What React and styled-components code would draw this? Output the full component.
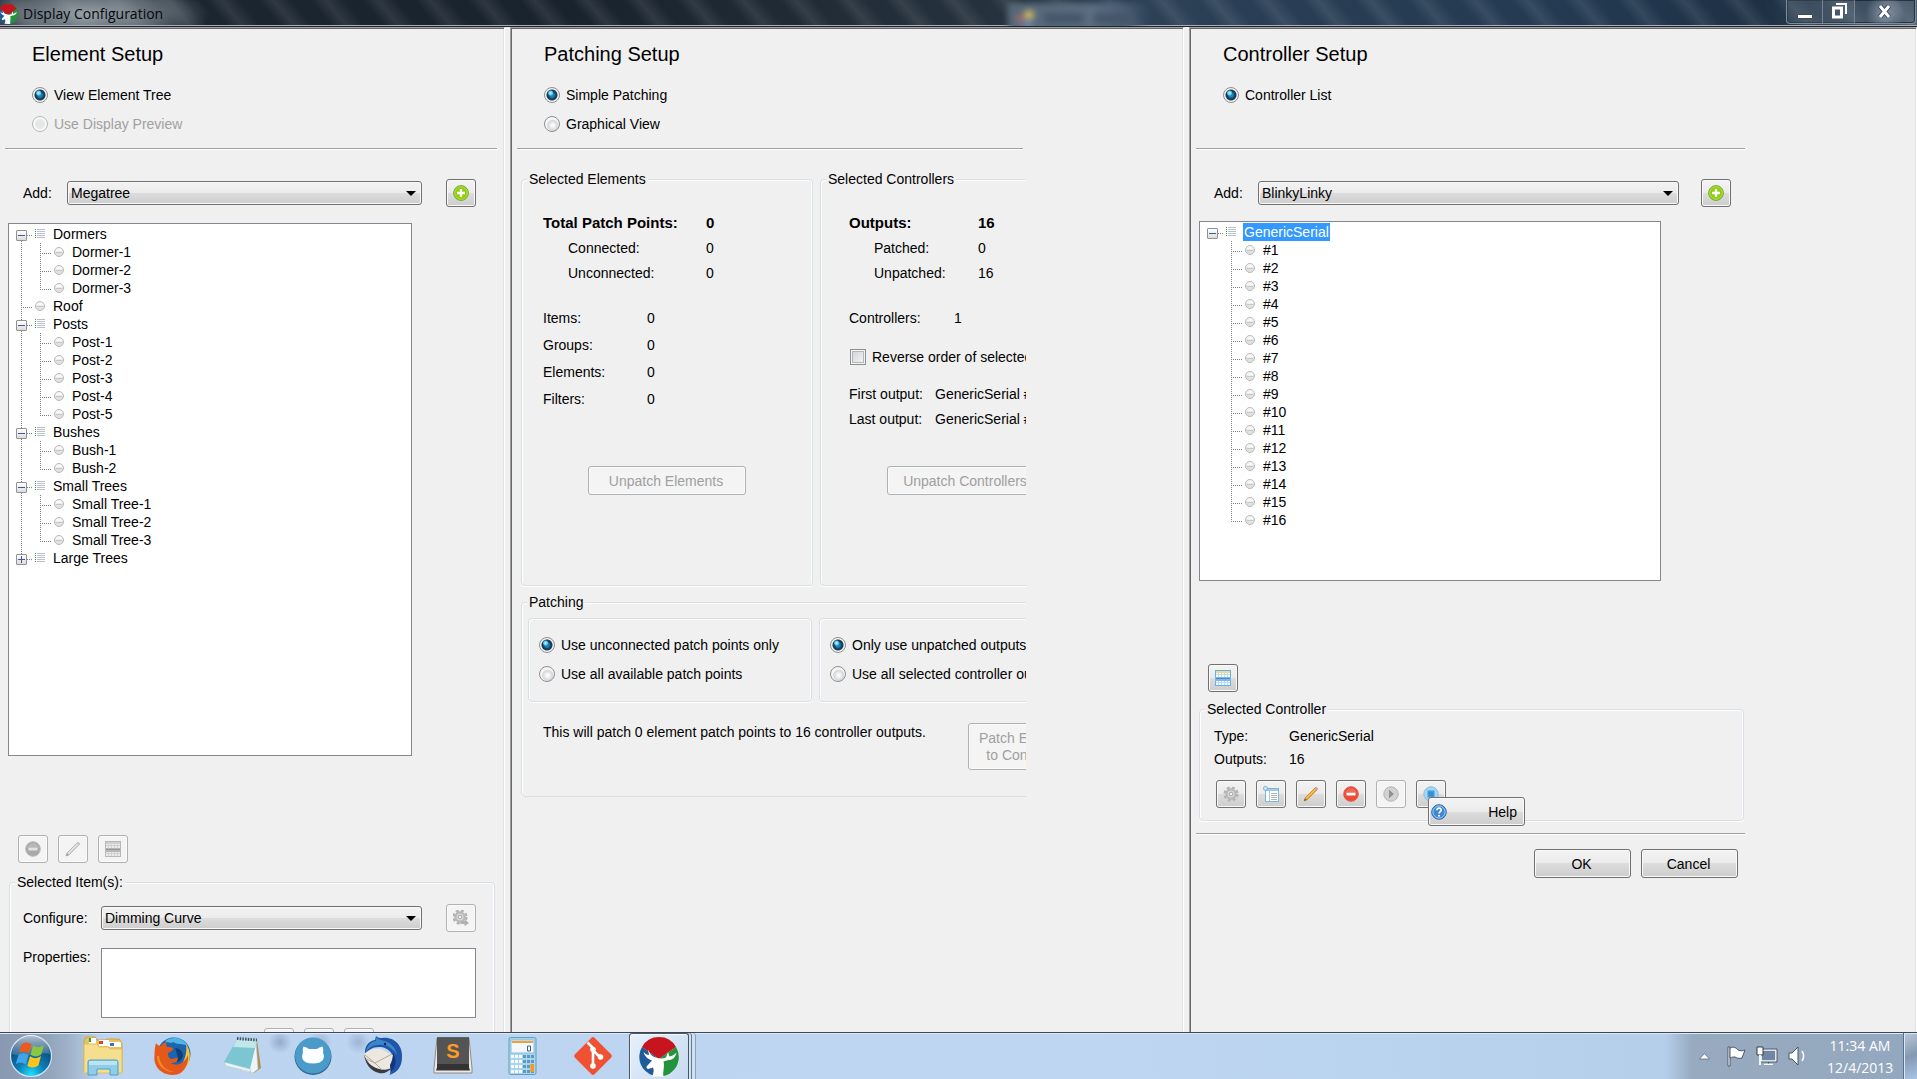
import React from "react";
import styled, { createGlobalStyle, css } from "styled-components";

const Global = createGlobalStyle`
  *, *::before, *::after { box-sizing: border-box; }
  html, body, #root { height: 100%; }
  body { margin: 0; overflow: hidden; }
  body, button, input, select, textarea {
    font-family: "Liberation Sans", Arial, sans-serif;
    font-size: 14px;
    line-height: 18px;
    color: #000;
  }
`;

const raised = "linear-gradient(#f3f3f3, #ebebeb 50%, #dddddd 50%, #cdcdcd)";

/* ---------- window frame ---------- */

const Screen = styled.div`
  display: flex;
  flex-direction: column;
  height: 100%;
  background: #f0f0f0;
`;

const TitleBar = styled.header`
  position: relative;
  display: flex;
  flex: none;
  justify-content: space-between;
  height: 27px;
  border-bottom: 1px solid #1c2430;
  box-shadow: inset 0 -1px #a9adba;
  overflow: hidden;
  background:
    radial-gradient(ellipse 120px 34px at 90px 14px, rgba(190, 200, 206, 0.75), rgba(150, 162, 170, 0.5) 60%, transparent),
    repeating-linear-gradient(50deg, rgba(255, 255, 255, 0) 0 14px, rgba(255, 255, 255, 0.09) 26px, rgba(255, 255, 255, 0) 40px),
    linear-gradient(90deg, #1d2731, #19232e 30%, #26323d 52%, #2c4056 60%, #233a52 82%, #1e3044 92%, #4d5e70);
`;

const Caption = styled.div`
  display: flex;
  align-items: center;
  gap: 5px;
  z-index: 1;
  padding-top: 2px;

  svg { display: block; margin-left: -2px; }
  h1 {
    margin: 0;
    font: 400 14px/20px "Open Sans", "Noto Sans", sans-serif;
    color: #05070a;
  }
`;

const GhostTab = styled.div`
  position: absolute;
  left: 1008px;
  top: 3px;
  width: 144px;
  height: 30px;
  filter: blur(3px);
  background:
    radial-gradient(circle 6px at 21px 12px, #d8c060 60%, transparent),
    radial-gradient(circle 5px at 12px 16px, #b06a70 50%, transparent),
    radial-gradient(circle 5px at 20px 23px, #6a94d0 50%, transparent),
    linear-gradient(90deg, transparent 34px, #46566a 38px 74px, transparent 78px 84px, #46566a 88px 120px, transparent 124px) 0 10px / 100% 11px no-repeat,
    linear-gradient(90deg, #566878, #5b6f82 60%, #4a5e74 80%, transparent);
`;

const WindowButtons = styled.div`
  display: flex;
  z-index: 1;
  height: 24px;
  margin-right: 1px;
  border: 1px solid #7f8c9a;
  border-top: 0;
  border-radius: 0 0 4px 4px;
  box-shadow: inset 0 0 0 1px rgba(20, 30, 42, 0.7);
`;

const WindowButton = styled.button`
  display: flex;
  align-items: center;
  justify-content: center;
  width: ${(p) => p.$width}px;
  padding: 0 0 2px;
  border: 0;
  border-left: ${(p) => (p.$first ? "0" : "1px solid #76838f")};
  background: ${(p) =>
    p.$glow ? "radial-gradient(circle at 50% 60%, rgba(190,205,220,.55), transparent 60%)" : "rgba(120,135,150,.22)"};
`;

const Columns = styled.main`
  display: grid;
  flex: 1;
  min-height: 0;
  grid-template-columns: minmax(0, 505fr) minmax(0, 674fr) minmax(0, 728fr);
  column-gap: 5px;
`;

const Panel = styled.section`
  display: flex;
  flex-direction: column;
  min-height: 0;
  overflow: hidden;
  border-top: 1px solid #a0a0a0;
  border-left: ${(p) => (p.$flush ? "0" : "1px solid #a0a0a0")};
  border-right: 1px solid #fff;
  box-shadow: inset ${(p) => (p.$flush ? "0" : "1px")} 1px #696969, inset -1px 0 #e3e3e3;
  padding: 1px 0 0 ${(p) => (p.$flush ? 0 : 1)}px;
`;

const Content = styled.div`
  display: flex;
  flex-direction: column;
  flex: none;
  width: ${(p) => p.$width}px;
  max-width: 100%;
  overflow: hidden;
  white-space: nowrap;
`;

const Head = styled.div`
  min-height: 119px;
  padding: 13px 0 0 32px;

  h2 {
    margin: 0 0 14px;
    font-size: 20px;
    font-weight: 400;
    line-height: 24px;
  }
`;

const Rule = styled.hr`
  flex: none;
  height: 2px;
  margin: ${(p) => p.$top || 0}px 0 0 5px;
  border: 0;
  border-top: 1px solid #a0a0a0;
  background: #fff;
`;

const PatchRule = styled(Rule)`
  margin-right: 3px;
`;

/* ---------- controls ---------- */

const Choice = styled.label`
  display: flex;
  align-items: center;
  gap: 6px;
  height: ${(p) => p.$height || 29}px;
  color: ${(p) => (p.$off ? "#a0a0a0" : "#000")};
`;

const Radio = styled.input.attrs({ type: "radio" })`
  appearance: none;
  flex: none;
  width: 16px;
  height: 16px;
  margin: 0;
  border: 1px solid #8e8f8f;
  border-radius: 50%;
  background: radial-gradient(circle at 55% 60%, #fbfbfb 1px, #d4d7db 5px, #f6f6f6 6px);

  &:checked {
    background:
      radial-gradient(circle at 40% 36%, #d8f6ff 0, #4fc3ee 2px, transparent 3px),
      radial-gradient(circle, #1b86bb 2px, #0d3a5c 4px, #243c50 5px, #f4f4f4 6px);
  }
  &:disabled { border-color: #b6b8b8; background: radial-gradient(circle, #e4e6e8 4px, #fafafa 6px); }
`;

const Check = styled.input.attrs({ type: "checkbox" })`
  appearance: none;
  flex: none;
  width: 16px;
  height: 16px;
  margin: 0 0 0 1px;
  border: 1px solid #8e8f8f;
  box-shadow: inset 0 0 0 1px #f4f4f4, inset 0 0 0 2px #b4b8bd;
  background: linear-gradient(135deg, #cdd1d6, #f6f6f6);
`;

const Combo = styled.span`
  position: relative;
  flex: 1;
  height: 24px;

  &::after {
    content: "";
    position: absolute;
    right: 6px;
    top: 10px;
    border: 5px solid transparent;
    border-top-color: #000;
    border-bottom: 0;
    pointer-events: none;
  }
  select {
    appearance: none;
    display: block;
    width: 100%;
    height: 24px;
    padding: 0 20px 0 3px;
    border: 1px solid #707070;
    border-radius: 3px;
    box-shadow: inset 0 0 0 1px #fafafa;
    background: ${raised};
  }
`;

const buttonFace = css`
  border: 1px solid #707070;
  border-radius: 3px;
  box-shadow: inset 0 0 0 1px #fafafa;
  background: ${raised};

  &:disabled {
    border-color: #adb2b5;
    background: #f4f4f4;
    color: #a0a0a0;
  }
`;

const IconButton = styled.button`
  display: flex;
  flex: none;
  align-items: center;
  justify-content: center;
  width: 30px;
  height: 28px;
  padding: 0;
  ${buttonFace}
`;

const Button = styled.button`
  width: ${(p) => p.$width || 97}px;
  min-height: 29px;
  padding: 1px 2px 0 0;
  line-height: 17px;
  ${buttonFace}
`;

const PatchButton = styled(Button)`
  flex: none;
  min-height: 47px;
`;

const HelpButton = styled.button`
  position: absolute;
  left: 12px;
  top: 17px;
  z-index: 1;
  display: flex;
  align-items: center;
  justify-content: space-between;
  width: 97px;
  height: 29px;
  padding: 0 7px 0 2px;
  ${buttonFace}
`;

const Anchor = styled.div`
  position: relative;
`;

/* ---------- layout rows ---------- */

const Row = styled.div`
  display: flex;
  gap: ${(p) => p.$gap || 0}px;
  margin-top: ${(p) => p.$top || 0}px;
  padding: 0 ${(p) => p.$right || 0}px 0 ${(p) => p.$left || 0}px;
  justify-content: ${(p) => p.$justify || "flex-start"};
  align-items: ${(p) => p.$align || "center"};
`;

const FieldLabel = styled.label`
  flex: none;
  width: ${(p) => p.$width}px;
`;

const Properties = styled.textarea`
  flex: 1;
  height: 70px;
  border: 1px solid #828790;
  border-radius: 0;
  background: #fff;
  resize: none;
`;

const Group = styled.fieldset`
  flex: none;
  min-width: 0;
  width: ${(p) => (p.$width ? p.$width + "px" : "auto")};
  min-height: ${(p) => p.$height || 0}px;
  margin: ${(p) => p.$margin || 0};
  padding: ${(p) => p.$pad || 0};
  border: 1px solid #d5dfe5;
  border-radius: 4px;
  box-shadow: inset 1px 1px #fff, inset -1px 0 #fff, 0 1px #fff;

  > legend {
    margin-left: 5px;
    padding: 0 2px;
    line-height: 18px;
    background: #f0f0f0;
  }
`;

const Inset = styled.div`
  padding: 0 ${(p) => p.$right || 0}px 0 ${(p) => p.$left}px;
`;

const Stats = styled.dl`
  display: grid;
  grid-template-columns: ${(p) => p.$label}px auto;
  grid-auto-rows: ${(p) => p.$pitch}px;
  align-items: center;
  margin: ${(p) => p.$top}px 0 0;

  dt, dd { margin: 0; }
`;

const Strong = styled.span`
  font-size: 15px;
  font-weight: 700;
`;

const Sub = styled.dt`
  && { padding-left: 25px; }
`;

const Message = styled.p`
  flex: 0 0 425px;
  margin: 0;
`;

/* ---------- tree ---------- */

const TreeBox = styled.div`
  width: ${(p) => p.$width}px;
  height: ${(p) => p.$height}px;
  margin: ${(p) => p.$top}px 0 0 8px;
  padding: 1px 0 0 12px;
  border: 1px solid #828790;
  background: #fff;
`;

const dotsDown = "repeating-linear-gradient(180deg, #808080 0 1px, transparent 1px 2px)";
const dotsAcross = "repeating-linear-gradient(90deg, #808080 0 1px, transparent 1px 2px)";

const Branch = styled.ul`
  margin: 0 0 0 ${(p) => (p.$nested ? 19 : 0)}px;
  padding: 0;
  list-style: none;
`;

const Node = styled.li`
  position: relative;

  &::before {
    content: "";
    position: absolute;
    left: 0;
    top: ${(p) => (p.$start ? 10 : 0)}px;
    width: 1px;
    ${(p) => (p.$end ? `height: ${p.$start ? 0 : 11}px;` : "bottom: 0;")}
    background: ${dotsDown};
  }
`;

const NodeLine = styled.div`
  display: flex;
  align-items: center;
  height: 18px;

  &::before {
    content: "";
    width: 12px;
    height: 1px;
    margin: 3px 2px 0 0;
    background: ${dotsAcross};
  }
  svg { display: block; }
`;

const NodeText = styled.span`
  margin-left: 7px;
  padding: 0 1px;
  ${(p) => p.$selected && "background: #3399ff; color: #fff;"}
`;

const Toggle = styled.button`
  position: absolute;
  left: -5px;
  top: 5px;
  width: 11px;
  height: 11px;
  padding: 0;
  border: 1px solid #919191;
  border-radius: 1px;
  background:
    linear-gradient(#3b5aa0, #3b5aa0) center / 7px 1px no-repeat,
    ${(p) => (p.$open ? "" : "linear-gradient(#3b5aa0, #3b5aa0) center / 1px 7px no-repeat,")}
    linear-gradient(#fff, #dcdcdc);
`;

const GroupGlyph = () => (
  <svg width="10" height="10" viewBox="0 0 10 10">
    {[0, 2, 4, 6, 8].map((y) => (
      <g key={y}>
        <rect x="0" y={y} width="1" height="1" fill="#3f8f4f" />
        <rect x="2" y={y} width="8" height="1" fill={y % 4 ? "#b4c4d4" : "#bdbdc4"} />
      </g>
    ))}
  </svg>
);

const BallGlyph = () => (
  <svg width="10" height="10" viewBox="0 0 10 10">
    <circle cx="5" cy="5" r="4.5" fill="#e2e2e2" stroke="#b9b9b9" />
    <path d="M1.5 4.5a3.5 3.2 0 0 1 7 0z" fill="#f8f8f8" />
    <path d="M2 5.5h6" stroke="#c6c6c6" />
  </svg>
);

function Tree({ nodes, nested }) {
  return (
    <Branch $nested={nested}>
      {nodes.map((n, i) => (
        <Node key={n.name} $start={!nested && i === 0} $end={i === nodes.length - 1}>
          <NodeLine>
            {n.items || n.closed ? <GroupGlyph /> : <BallGlyph />}
            <NodeText $selected={n.selected}>{n.name}</NodeText>
          </NodeLine>
          {(n.items || n.closed) && <Toggle $open={!n.closed} aria-label={"Toggle " + n.name} />}
          {n.items && <Tree nodes={n.items} nested />}
        </Node>
      ))}
    </Branch>
  );
}

const series = (prefix, count) => Array.from({ length: count }, (_, i) => ({ name: prefix + (i + 1) }));

const elements = [
  { name: "Dormers", items: series("Dormer-", 3) },
  { name: "Roof" },
  { name: "Posts", items: series("Post-", 5) },
  { name: "Bushes", items: series("Bush-", 2) },
  { name: "Small Trees", items: series("Small Tree-", 3) },
  { name: "Large Trees", closed: true },
];

const controllers = [{ name: "GenericSerial", selected: true, items: series("#", 16) }];

/* ---------- button icons ---------- */

const Svg16 = ({ children }) => (
  <svg width="16" height="16" viewBox="0 0 16 16" fill="none">{children}</svg>
);

const PlusIcon = () => (
  <Svg16>
    <circle cx="8" cy="8" r="7.4" fill="#8fce0c" stroke="#79a83a" />
    <circle cx="8" cy="8" r="6.3" stroke="#b9e35a" strokeWidth=".8" />
    <path d="M8 4v8M4 8h8" stroke="#fff" strokeWidth="2.4" />
  </Svg16>
);

const MinusIcon = ({ off }) => (
  <Svg16>
    <circle cx="8" cy="8" r="7.3" fill={off ? "#a9a9a9" : "#ee4a34"} stroke={off ? "#b9b9b9" : "#d8604c"} />
    <path d="M2.5 7a5.6 5.6 0 0 1 11 0z" fill="#fff" opacity=".18" />
    <rect x="3.5" y="6.7" width="9" height="2.8" rx=".5" fill={off ? "#e2e2e2" : "#fff"} />
  </Svg16>
);

const PencilIcon = ({ off }) => (
  <Svg16>
    <path d="M1 15l1.2-3.2L12.8 1.2 14.7 3.1 4.1 13.8z" fill={off ? "#d6d6d6" : "#f6a21c"} stroke={off ? "#ababab" : "#b88232"} strokeWidth=".8" />
    <path d="M3.2 12.4L12.8 2.8" stroke={off ? "#f0f0f0" : "#ffd874"} />
    <path d="M12 2L13.200 .8 15.2 2.8 14 4z" fill={off ? "#c4c4c4" : "#d99aca"} />
    <path d="M1 15l1-2.6 1.800 1.4z" fill={off ? "#999" : "#7a5a3c"} />
  </Svg16>
);

const GridIcon = ({ off }) => {
  const line = off ? "#d0d0d0" : "#bcdcf0";
  return (
    <Svg16>
      <rect x=".5" y=".5" width="15" height="15" fill={off ? "#ececec" : "#f4fafd"} stroke={off ? "#b8b8b8" : "#62b3e2"} />
      <rect x="1" y="1" width="14" height="2" fill={off ? "#cfcfcf" : "#f1d78c"} />
      <path d="M3.5 3v12M6.5 3v12M9.5 3v12M12.5 3v12M1 4.5h14M1 12.5h14" stroke={line} />
      <rect x="0" y="7" width="16" height="4" fill={off ? "#b6b6b6" : "#7fb8e6"} />
      <path d="M1 8.5h14" stroke={off ? "#989898" : "#4a8acb"} />
    </Svg16>
  );
};

const GearIcon = ({ arrow }) => (
  <Svg16>
    <g transform={arrow ? "translate(-1 -1)" : undefined}>
      <circle cx="8" cy="8" r="6.4" stroke="#b4b4b4" strokeWidth="2.4" strokeDasharray="3 2.03" />
      <circle cx="8" cy="8" r="4.6" fill="#dadada" stroke="#b8b8b8" strokeWidth="2.200" />
      <circle cx="8" cy="8" r="1.8" fill="#f2f2f2" stroke="#999" strokeWidth=".8" />
    </g>
    {arrow && <path d="M7.5 11.5h4V9.2L16 13l-4.5 3.4V14h-4z" fill="#b0b0b0" />}
  </Svg16>
);

const ListIcon = () => (
  <Svg16>
    <rect x="2.5" y="2.5" width="13" height="13" fill="#fff" stroke="#7db4d8" />
    <path d="M3 4h12" stroke="#9ccbe8" strokeWidth="2" />
    <path d="M6.5 5v10" stroke="#9ccbe8" />
    <path d="M8 7.5h6M8 9.5h6M8 11.5h6M8 13.5h6" stroke="#a8b0b8" />
    <circle cx="2.4" cy="2.4" r="2" fill="#d4ecfa" stroke="#6fb0dc" />
  </Svg16>
);

const PlayIcon = () => (
  <Svg16>
    <circle cx="8" cy="8" r="7.2" fill="#d2d2d2" stroke="#b4b4b4" />
    <path d="M6 3.8L11 8l-5 4.2z" fill="#929292" />
  </Svg16>
);

const StopIcon = () => (
  <Svg16>
    <circle cx="8" cy="8" r="7.2" fill="#a4d6f5" stroke="#85bbe0" />
    <rect x="4.8" y="4.8" width="6.4" height="6.4" fill="#3490d2" stroke="#68b0e2" />
  </Svg16>
);

const HelpIcon = () => (
  <Svg16>
    <circle cx="8" cy="8" r="7.3" fill="#3f88d2" stroke="#2c6cb2" />
    <circle cx="8" cy="8" r="6.1" stroke="#a4cdf0" />
    <path d="M5.8 6.3c0-3 4.6-2.8 4.4-.1C10.1 7.6 8 7.7 8 9.5" stroke="#fff" strokeWidth="1.6" />
    <circle cx="8" cy="11.7" r="1" fill="#fff" />
  </Svg16>
);

const DeerLogo = ({ size }) => (
  <svg width={size} height={size} viewBox="0 0 40 40">
    <path d="M20 22L3 10A19.5 19.5 0 0 1 37 10z" fill="#c8151d" />
    <path d="M20 22L3 10A19.5 19.5 0 0 0 14 38.5z" fill="#1d5c98" />
    <path d="M20 22L37 10A19.5 19.5 0 0 1 14 38.5z" fill="#23943c" />
    <path d="M13 39.500c2-4 2-7 1-9l-5 1.500c-1.500-.5-2-2-1-3l5-5.500c-3-1-7-3-8.500-8.500 2 2 3.500 3 5.500 3l-1-5.500c2 4.500 4 7 8 8 3 1.200 7 1.200 10 0l2-5.500 1.500 4.500c3-.5 5-2 7-4-1 5-4 7.500-8 7.500l-5 1.500c1.500 5-1 10 0 15.500z" fill="#fff" />
  </svg>
);

/* ---------- taskbar ---------- */

const Taskbar = styled.footer`
  display: flex;
  flex: none;
  justify-content: space-between;
  height: 47px;
  border-top: 1px solid #3c4756;
  box-shadow: inset 0 1px #dfeaf6;
  background:
    radial-gradient(circle 12px at 280px 9px, rgba(110, 135, 170, 0.5), transparent),
    radial-gradient(circle 12px at 320px 9px, rgba(110, 135, 170, 0.4), transparent),
    radial-gradient(circle 12px at 358px 9px, rgba(110, 135, 170, 0.4), transparent),
    linear-gradient(90deg, #8798b0, #93a5bb 50px, #a0b3ca 70px, #bcd4ef 100px, #bed6f1 1100px, #b5cfeb calc(100% - 252px), #97aac0 calc(100% - 225px), #93a7be);
`;

const TaskList = styled.nav`
  display: flex;
  align-items: stretch;
`;

const Task = styled.button`
  display: flex;
  align-items: center;
  justify-content: center;
  width: ${(p) => p.$width || 70}px;
  padding: 0;
  border: 0;
  background: none;
  ${(p) =>
    p.$active &&
    css`
      margin-left: 1px;
      border: 1px solid #47586c;
      border-bottom: 0;
      border-radius: 3px 3px 0 0;
      box-shadow: inset 1px 1px #f4f9fe, 2px 0 #cfe0f2, 3px 0 #66788e, 6px 0 #cfe0f2, 7px 0 #8fa2b8;
      background: linear-gradient(135deg, #e6f0fa, #c6daf0);
    `}
`;

const Tray = styled.div`
  display: flex;
  align-items: center;

  > svg { display: block; }
`;

const Clock = styled.time`
  width: 66px;
  margin: 2px 10px 0 17px;
  text-align: center;
  font: 400 14px/22px "Open Sans", "Noto Sans", sans-serif;
  color: #fff;
`;

const ShowDesktop = styled.button`
  align-self: stretch;
  width: 14px;
  padding: 0;
  border: 1px solid #5b6f88;
  border-width: 0 0 0 1px;
  box-shadow: inset 1px 1px #dbe7f4;
  background: linear-gradient(160deg, #b9c8da, #8498b2 50%, #a9c4e4);
`;

const StartOrb = () => (
  <svg width="44" height="44" viewBox="0 0 44 44">
    <defs>
      <radialGradient id="orb" cx="50%" cy="95%" r="85%">
        <stop offset="0" stopColor="#1fe0ff" />
        <stop offset=".4" stopColor="#0d7cb4" />
        <stop offset="1" stopColor="#0b3c6b" />
      </radialGradient>
      <linearGradient id="gloss" x1="0" y1="0" x2="0" y2="1">
        <stop offset="0" stopColor="#fff" stopOpacity=".7" />
        <stop offset="1" stopColor="#fff" stopOpacity=".12" />
      </linearGradient>
    </defs>
    <circle cx="22" cy="22" r="20.5" fill="url(#orb)" stroke="#cfe6f4" strokeWidth="1.2" />
    <path d="M3 20a19 19 0 0 1 38 0c-10-3-24 5-38 0z" fill="url(#gloss)" />
    <path d="M12.5 10.5c4-3 7-2 10 0l-2.5 9c-3.5-2-6.5-2.5-10-.3z" fill="#ee5a1e" />
    <path d="M24 11.5c4 2.5 7 2 11-.5l-2.8 9.500c-3.600 2.500-7 2.500-10.500.2z" fill="#8cc63f" />
    <path d="M9.500 21c3.500-2.500 7-2 10 0l-2.600 9.500c-3.500-2-6.500-2.500-10.200-.3z" fill="#3fa4e8" />
    <path d="M21 22.300c4 2.500 7 2.500 11-.2l-2.600 9.400c-3.800 2.600-7.400 2.500-11 .3z" fill="#fdc51c" />
  </svg>
);

const FolderLogo = () => (
  <svg width="42" height="42" viewBox="0 0 42 42">
    <path d="M2 6l2-4h9l2 3h8l2-1h12l3 4v29H2z" fill="#e6c55c" stroke="#c9a545" />
    <path d="M7 3h7v6H7zM17 5h10v6H17zM27 7h12v5H27z" fill="#fff" />
    <path d="M7 3h2v4H7z" fill="#3a9c3a" />
    <path d="M17 6h4v3h-4z" fill="#d8452c" />
    <path d="M28 8h4v3h-4z" fill="#3276c8" />
    <path d="M2 9h13l2 3h9l2 2h12v24H2z" fill="#f5df8e" stroke="#dcbf62" />
    <path d="M6 40V27q0-2 2-2h26q2 0 2 2v13h-8v-6H15v6z" fill="#8fcdea" stroke="#4a9fcd" />
    <path d="M7 26h28v4H7z" fill="#c6e8f6" opacity=".8" />
  </svg>
);

const FirefoxLogo = () => (
  <svg width="40" height="40" viewBox="0 0 40 40">
    <circle cx="21" cy="18" r="16.5" fill="#1c66ae" />
    <path d="M12 5c7-5 18-4 23 5-6-3-12-1-14-4-2 1-6 1-9-1z" fill="#4fb6e6" />
    <path d="M33 8c6 8 5 20-3 26s-19 5-25-2c7 4 19 5 24-4 4-7 5-13 4-20z" fill="#f7c23c" />
    <path d="M3 7c1 2 3 3 5 3 2-3 4-4 6-4-1 2-1 3 0 5 2 0 4 0 6 1 0 3-3 4-5 5 0 4 1 5 3 6 3 0 5-2 8-1-1 4-5 5-8 5 6 4 14 0 17-8 1 9-4 20-15 20C8 39 0 30 1.500 19 1.500 14 2 11 3 7z" fill="#e4591b" />
    <path d="M4 20c0 10 8 16 17 16-9-2-14-7-15-16z" fill="#f58a2a" />
    <path d="M22 12c5 0 8 4 8 8-1 4-4 6-6 6 2-4 0-8-2-14z" fill="#0e3f7c" />
  </svg>
);

const NotepadLogo = () => (
  <svg width="40" height="40" viewBox="0 0 40 40">
    <path d="M34 4l4 28-7 5-4-1z" fill="#a8925c" />
    <path d="M33 5l2 28-5 4-12-2z" fill="#eef3f5" stroke="#b8c4c8" strokeWidth=".6" />
    <path d="M14 3l20 1-7 29-26-7z" fill="#7cc6d2" />
    <path d="M14 3l20 1-2 8-22-1z" fill="#c2e6ea" />
    <path d="M1 26l26 7 1 3-25-6z" fill="#e8f4f6" stroke="#9fc0c6" strokeWidth=".5" />
    <path d="M14 2.5l20 1.5" stroke="#46535c" strokeWidth="3" strokeDasharray="1.5 1.2" />
  </svg>
);

const CatLogo = () => (
  <svg width="40" height="40" viewBox="0 0 40 40">
    <circle cx="20" cy="20.5" r="18.5" fill="#2c678e" />
    <circle cx="20" cy="19.5" r="18" fill="#4a9aca" />
    <path d="M10.5 10.500c2 .5 4 1.500 5.500 2.500h8c1.500-1 3.500-2 5.500-2.500 1 2 .8 5 .5 6 2.500 6 0 11-10 11s-12.500-5-10-11c-.3-1-.5-4 .5-6z" fill="#fdfeff" />
  </svg>
);

const ThunderbirdLogo = () => (
  <svg width="42" height="42" viewBox="0 0 42 42">
    <path d="M14 1c2 2 4 2 6 2 12-2 21 8 20 19 0 10-5 16-13 18 3-3 4-5 4-8 3-12-4-20-14-20C10 12 6 15 3 20 2 11 7 6 13 5z" fill="#1f55a8" />
    <path d="M14 2c2 3 6 3 9 4 6 2 11 7 12 14-5-8-12-11-19-10-6 0-9 3-12 7 1-6 4-10 10-11z" fill="#3a86c8" />
    <path d="M2 19c4-4 11-6 17-5l12 6-1 10c-4 5-9 7-14 6C8 34 3 27 2 19z" fill="#ece8df" />
    <path d="M2 19c1 9 6 17 15 19 5 1 9-1 13-5-4 2-9 2-13 1C9 32 4 26 2 19z" fill="#3a3a44" />
    <path d="M3 20l10 8 17-9M4 24l9 4 7 7" stroke="#b3aa9c" fill="none" />
    <path d="M31 18c4 6 3 14-3 21 1-4 0-6 0-9 2-4 3-8 3-12z" fill="#12357a" />
    <circle cx="23" cy="9" r="1.2" fill="#0c2350" />
  </svg>
);

const SublimeLogo = () => (
  <svg width="40" height="40" viewBox="0 0 40 40">
    <path d="M4 2h32l3 30v5H1v-5z" fill="#ece9e4" stroke="#8d8a86" />
    <path d="M4 1.500h32v30l1 3H3l1-3z" fill="#333" />
    <path d="M4 1.500h32V28H4z" fill="#545454" />
    <text x="20" y="22" textAnchor="middle" fontFamily="Liberation Sans, sans-serif" fontWeight="700" fontSize="20" fill="#ff9a22">S</text>
  </svg>
);

const CalculatorLogo = () => (
  <svg width="30" height="40" viewBox="0 0 30 40">
    <rect x="1" y="1.500" width="27" height="37" rx="1.500" fill="#a8d4ec" stroke="#5e9fc6" />
    <rect x="3" y="4" width="23" height="13" fill="#f2f8fc" stroke="#8cbcd8" />
    <rect x="4" y="5" width="21" height="2" fill="#f0a030" />
    <path d="M19.500 10h3v5h-3z" stroke="#3c6288" fill="none" />
    {[20, 25, 30, 35].map((y) =>
      [3, 7, 11, 15, 19, 23].map((x) => <rect key={x + "-" + y} x={x} y={y - 1} width="3" height="3" fill={x < 15 ? "#f6fafd" : "#5c9ac4"} />)
    )}
    <rect x="22.500" y="28" width="3.500" height="8" fill="#f59a1c" />
  </svg>
);

const GitLogo = () => (
  <svg width="40" height="40" viewBox="0 0 40 40">
    <rect x="6" y="6" width="28" height="28" rx="2.500" fill="#f05133" transform="rotate(45 20 20)" />
    <path d="M14.500 6.500L20 12v18M20 14.500l7 6.500" stroke="#fff" strokeWidth="2.600" fill="none" />
    <circle cx="20" cy="13.500" r="2.800" fill="#fff" />
    <circle cx="27.500" cy="21" r="2.800" fill="#fff" />
    <circle cx="20" cy="30" r="2.800" fill="#fff" />
  </svg>
);

const TrayIcons = () => (
  <svg width="112" height="24" viewBox="0 0 112 24" strokeLinejoin="round">
    <path d="M1.500 15l5-5.500 5 5.500z" fill="#fff" stroke="#5a6b80" strokeWidth=".8" />
    <path d="M30 3v19h2V3z" fill="#fff" stroke="#39485a" strokeWidth=".8" />
    <path d="M32 4c4-2 6 0 8 2 3 1 5 1 7 0l-3 8c-3 1-5 0-7-1-2 0-3 0-5 1z" fill="#fff" stroke="#39485a" strokeWidth=".9" />
    <path d="M63 6h15v11H63z" fill="#6f87a2" stroke="#fff" strokeWidth="1.600" />
    <path d="M62 5h17v13H62zM66 21h9M70.500 18v3" fill="none" stroke="#39485a" strokeWidth=".8" />
    <path d="M66 20.500h9" stroke="#fff" strokeWidth="1.600" />
    <rect x="59" y="3" width="6" height="8" fill="#fff" stroke="#2f3c4c" />
    <path d="M62 11v10" stroke="#fff" strokeWidth="1.800" />
    <path d="M91 9h3l6-6v18l-6-6h-3z" fill="#fff" stroke="#39485a" strokeWidth=".9" />
    <path d="M104 7c2 3 2 7 0 10" stroke="#fff" strokeWidth="1.500" fill="none" />
  </svg>
);

const tasks = [
  ["Windows Explorer", FolderLogo],
  ["Firefox", FirefoxLogo],
  ["Notepad", NotepadLogo],
  ["GitHub", CatLogo],
  ["Thunderbird", ThunderbirdLogo],
  ["Sublime Text", SublimeLogo],
  ["Calculator", CalculatorLogo],
  ["Git", GitLogo],
];

/* ---------- panels ---------- */

function ElementPanel() {
  return (
    <Panel $flush>
      <Content $width={497}>
        <Head>
          <h2>Element Setup</h2>
          <Choice><Radio name="element-view" defaultChecked />View Element Tree</Choice>
          <Choice $off><Radio name="element-view" disabled />Use Display Preview</Choice>
        </Head>
        <Rule />
        <Row $top={29} $left={23} $right={21}>
          <FieldLabel $width={44} htmlFor="add-element">Add:</FieldLabel>
          <Combo><select id="add-element"><option>Megatree</option></select></Combo>
          <Row $left={24}><IconButton aria-label="Add element"><PlusIcon /></IconButton></Row>
        </Row>
        <TreeBox $top={16} $width={404} $height={533}><Tree nodes={elements} /></TreeBox>
        <Row $top={79} $left={18} $gap={10}>
          <IconButton disabled aria-label="Remove element"><MinusIcon off /></IconButton>
          <IconButton disabled aria-label="Rename element"><PencilIcon off /></IconButton>
          <IconButton disabled aria-label="Element grid"><GridIcon off /></IconButton>
        </Row>
        <Group $margin="10px 2px 0 9px" $pad="0 0 30px">
          <legend>Selected Item(s):</legend>
          <Inset $left={13} $right={18}>
            <Row $top={13}>
              <FieldLabel $width={78} htmlFor="configure">Configure:</FieldLabel>
              <Combo><select id="configure"><option>Dimming Curve</option></select></Combo>
              <Row $left={24}><IconButton disabled aria-label="Configure item"><GearIcon arrow /></IconButton></Row>
            </Row>
            <Row $top={16} $align="flex-start">
              <FieldLabel $width={78} htmlFor="properties">Properties:</FieldLabel>
              <Properties id="properties" />
            </Row>
            <Row $top={10} $left={241} $gap={10}>
              <IconButton disabled aria-label="Add property"><PlusIcon /></IconButton>
              <IconButton disabled aria-label="Edit property"><PencilIcon off /></IconButton>
              <IconButton disabled aria-label="Remove property"><MinusIcon off /></IconButton>
            </Row>
          </Inset>
        </Group>
      </Content>
    </Panel>
  );
}

function PatchingPanel() {
  return (
    <Panel>
      <Content $width={514}>
        <Head>
          <h2>Patching Setup</h2>
          <Choice><Radio name="patch-view" defaultChecked />Simple Patching</Choice>
          <Choice><Radio name="patch-view" />Graphical View</Choice>
        </Head>
        <PatchRule />
        <Row $top={20} $left={9} $gap={7} $align="stretch">
          <Group $width={292} $height={416}>
            <legend>Selected Elements</legend>
            <Inset $left={21}>
              <Stats $top={22} $label={163} $pitch={25}>
                <dt><Strong>Total Patch Points:</Strong></dt><dd><Strong>0</Strong></dd>
                <Sub>Connected:</Sub><dd>0</dd>
                <Sub>Unconnected:</Sub><dd>0</dd>
              </Stats>
              <Stats $top={19} $label={104} $pitch={27}>
                <dt>Items:</dt><dd>0</dd>
                <dt>Groups:</dt><dd>0</dd>
                <dt>Elements:</dt><dd>0</dd>
                <dt>Filters:</dt><dd>0</dd>
              </Stats>
            </Inset>
            <Row $top={54} $justify="center"><Button $width={158} disabled>Unpatch Elements</Button></Row>
          </Group>
          <Group $width={292} $height={416}>
            <legend>Selected Controllers</legend>
            <Inset $left={28}>
              <Stats $top={22} $label={129} $pitch={25}>
                <dt><Strong>Outputs:</Strong></dt><dd><Strong>16</Strong></dd>
                <Sub>Patched:</Sub><dd>0</dd>
                <Sub>Unpatched:</Sub><dd>16</dd>
              </Stats>
              <Stats $top={19} $label={105} $pitch={27}>
                <dt>Controllers:</dt><dd>1</dd>
              </Stats>
              <Row $top={17}>
                <Choice $height={18}><Check />Reverse order of selected controllers</Choice>
              </Row>
              <Stats $top={15} $label={86} $pitch={25}>
                <dt>First output:</dt><dd>GenericSerial #1</dd>
                <dt>Last output:</dt><dd>GenericSerial #16</dd>
              </Stats>
            </Inset>
            <Row $top={35} $justify="center"><Button $width={158} disabled>Unpatch Controllers</Button></Row>
          </Group>
        </Row>
        <Group $margin="7px 0 0 9px" $width={591} $height={204}>
          <legend>Patching</legend>
          <Row $top={7} $left={6} $gap={7}>
            <Group $width={284} $height={84} $pad="11px 0 0 10px">
              <Choice><Radio name="points" defaultChecked />Use unconnected patch points only</Choice>
              <Choice><Radio name="points" />Use all available patch points</Choice>
            </Group>
            <Group $width={284} $height={84} $pad="11px 0 0 10px">
              <Choice><Radio name="outputs" defaultChecked />Only use unpatched outputs</Choice>
              <Choice><Radio name="outputs" />Use all selected controller outputs</Choice>
            </Group>
          </Row>
          <Row $top={21} $left={21} $align="flex-start">
            <Message>This will patch 0 element patch points to 16 controller outputs.</Message>
            <PatchButton $width={122} disabled>Patch Elements<br />to Controllers</PatchButton>
          </Row>
        </Group>
      </Content>
    </Panel>
  );
}

function ControllerPanel() {
  return (
    <Panel>
      <Content $width={554}>
        <Head>
          <h2>Controller Setup</h2>
          <Choice><Radio name="controller-view" defaultChecked />Controller List</Choice>
        </Head>
        <Rule />
        <Row $top={29} $left={23} $right={14}>
          <FieldLabel $width={44} htmlFor="add-controller">Add:</FieldLabel>
          <Combo><select id="add-controller"><option>BlinkyLinky</option></select></Combo>
          <Row $left={22}><IconButton aria-label="Add controller"><PlusIcon /></IconButton></Row>
        </Row>
        <TreeBox $top={14} $width={462} $height={360}><Tree nodes={controllers} /></TreeBox>
        <Row $top={83} $left={17}>
          <IconButton aria-label="Controller grid"><GridIcon /></IconButton>
        </Row>
        <Group $margin="8px 1px 0 8px" $pad="0 0 12px">
          <legend>Selected Controller</legend>
          <Inset $left={14}>
            <Stats $top={6} $label={75} $pitch={23}>
              <dt>Type:</dt><dd>GenericSerial</dd>
              <dt>Outputs:</dt><dd>16</dd>
            </Stats>
            <Row $top={10} $left={2} $gap={10}>
              <IconButton aria-label="Configure controller"><GearIcon /></IconButton>
              <IconButton aria-label="Controller channels"><ListIcon /></IconButton>
              <IconButton aria-label="Rename controller"><PencilIcon /></IconButton>
              <IconButton aria-label="Remove controller"><MinusIcon /></IconButton>
              <IconButton disabled aria-label="Start controller"><PlayIcon /></IconButton>
              <Anchor>
                <IconButton aria-label="Stop controller"><StopIcon /></IconButton>
                <HelpButton><HelpIcon />Help</HelpButton>
              </Anchor>
            </Row>
          </Inset>
        </Group>
        <Rule $top={12} />
        <Row $top={14} $right={7} $gap={10} $justify="flex-end">
          <Button>OK</Button>
          <Button>Cancel</Button>
        </Row>
      </Content>
    </Panel>
  );
}

export default function App() {
  return (
    <>
      <Global />
      <Screen>
        <TitleBar>
          <Caption>
            <DeerLogo size={20} />
            <h1>Display Configuration</h1>
          </Caption>
          <GhostTab />
          <WindowButtons>
            <WindowButton $width={35} $first aria-label="Minimize">
              <svg width="18" height="18" viewBox="0 0 18 18"><path d="M1.500 12.500h15v4h-15z" fill="#fff" stroke="#3b4755" /></svg>
            </WindowButton>
            <WindowButton $width={32} aria-label="Restore">
              <svg width="18" height="18" viewBox="0 0 18 18" fill="none">
                <path d="M6 2h10v10" stroke="#fff" strokeWidth="2" />
                <path d="M3.500 6h8v9h-8z" stroke="#fff" strokeWidth="3" />
              </svg>
            </WindowButton>
            <WindowButton $width={61} $glow aria-label="Close">
              <svg width="18" height="18" viewBox="0 0 18 18" fill="none">
                <path d="M4 4l9 11M13 4L4 15" stroke="#39434f" strokeWidth="5" />
                <path d="M4 4l9 11M13 4L4 15" stroke="#fff" strokeWidth="3" />
              </svg>
            </WindowButton>
          </WindowButtons>
        </TitleBar>
        <Columns>
          <ElementPanel />
          <PatchingPanel />
          <ControllerPanel />
        </Columns>
        <Taskbar>
          <TaskList>
            <Task $width={62} aria-label="Start"><StartOrb /></Task>
            <Row $left={6} $align="stretch">
              {tasks.map(([name, Logo]) => (
                <Task key={name} aria-label={name}><Logo /></Task>
              ))}
              <Task $active $width={60} aria-label="Vixen"><DeerLogo size={40} /></Task>
            </Row>
          </TaskList>
          <Tray>
            <TrayIcons />
            <Clock>11:34 AM<br />12/4/2013</Clock>
            <ShowDesktop aria-label="Show desktop" />
          </Tray>
        </Taskbar>
      </Screen>
    </>
  );
}
